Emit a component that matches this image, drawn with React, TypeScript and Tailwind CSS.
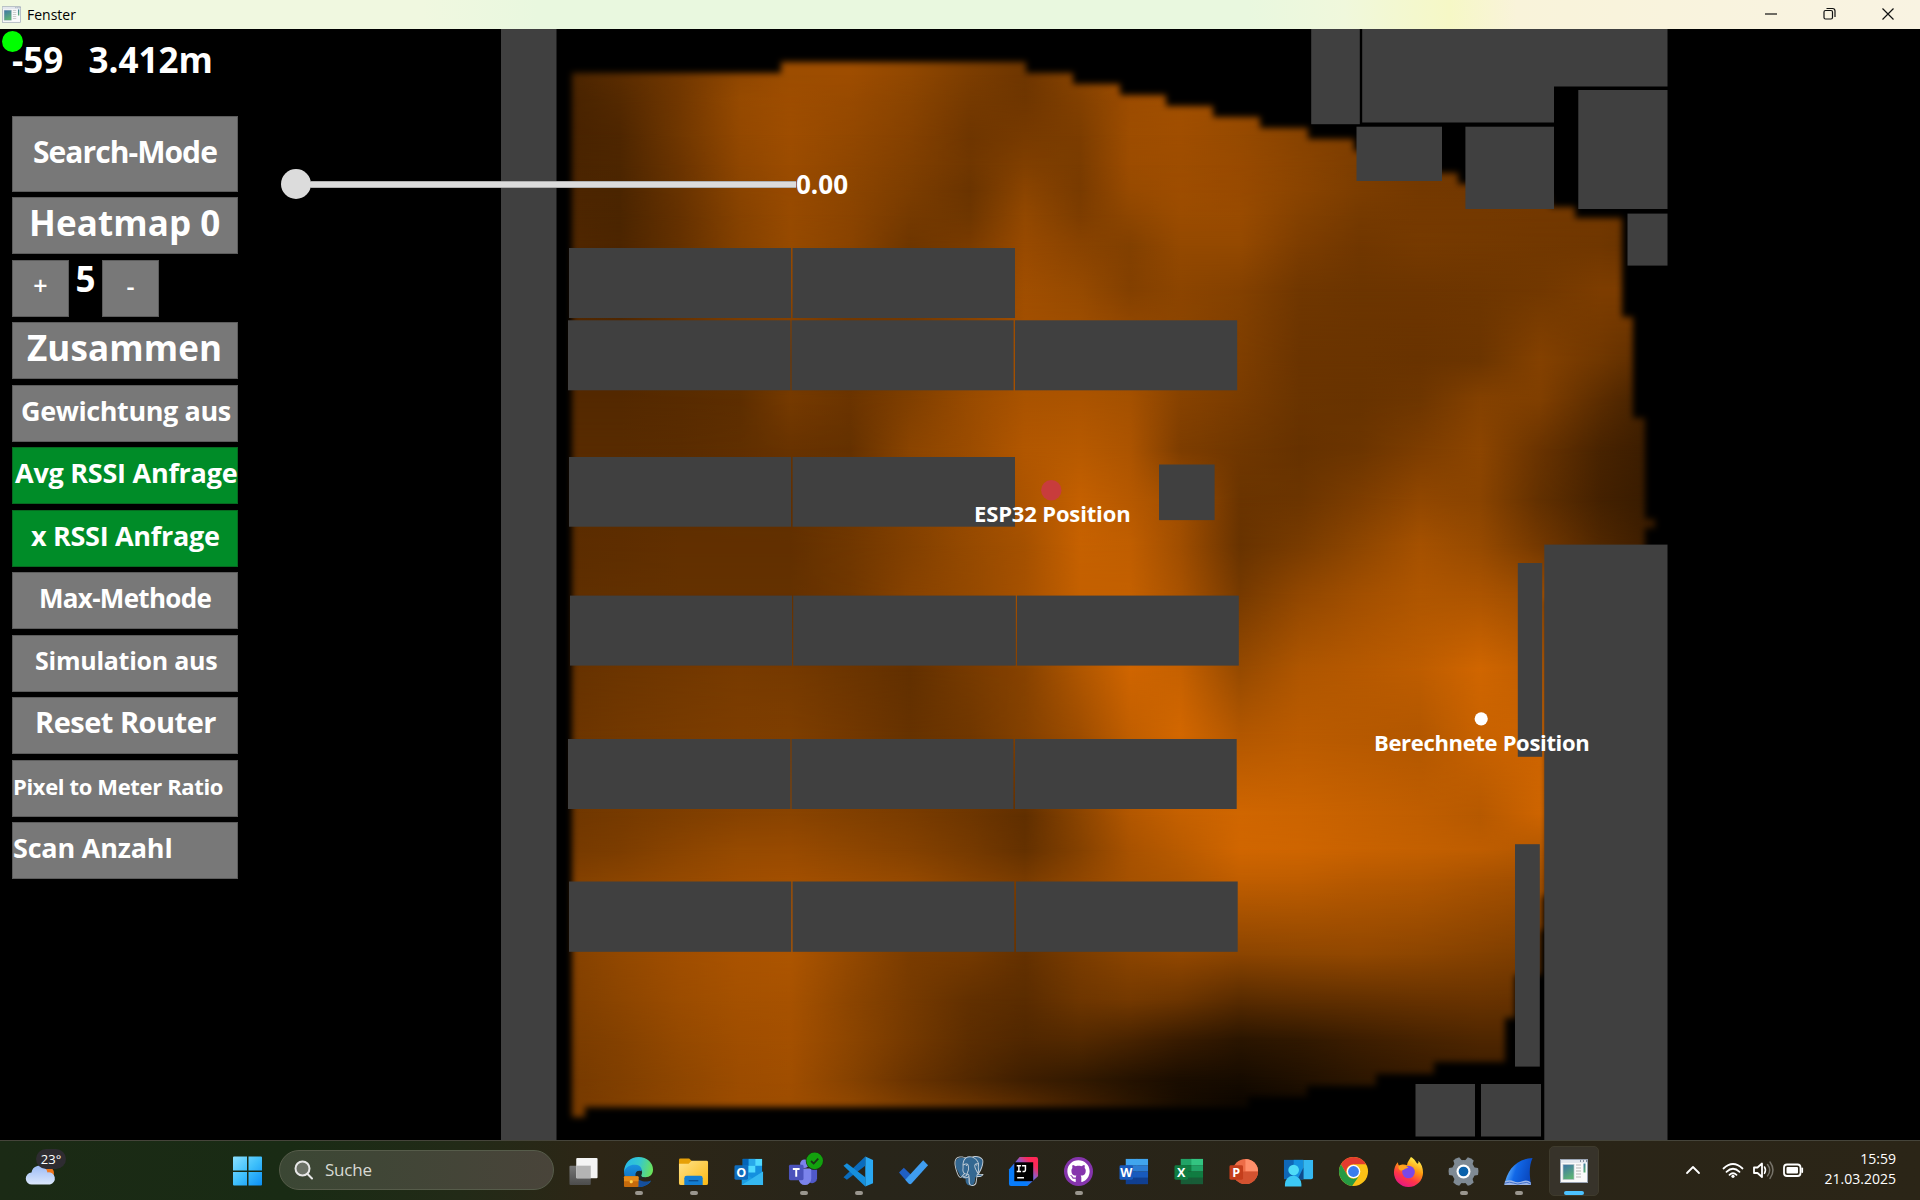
import React from "react";
import { SiPostgresql } from "react-icons/si";
import { FaGithub } from "react-icons/fa";

const SANS = "font-['Open_Sans','Noto_Sans',sans-serif]";

/* ---------- heat field ---------- */

const COLS = [570, 620, 680, 740, 790, 850, 910, 970, 1025, 1080, 1130, 1180, 1240, 1300, 1360, 1420, 1480, 1540, 1600, 1650];

const FIELD: [number, number[]][] = [
  [75, [75, 90, 114, 144, 157, 158, 144, 124, 110, 136, 160, 162, 155, 140, 125, 118, 115, 115, 112, 110]],
  [100, [72, 84, 113, 150, 158, 152, 138, 118, 111, 130, 156, 161, 153, 138, 125, 118, 115, 115, 112, 110]],
  [135, [72, 78, 112, 147, 158, 147, 133, 111, 119, 124, 157, 160, 150, 136, 125, 118, 115, 115, 112, 110]],
  [165, [74, 77, 107, 143, 155, 143, 128, 112, 128, 122, 156, 158, 152, 138, 124, 116, 115, 115, 115, 112]],
  [190, [76, 75, 104, 138, 152, 140, 124, 106, 138, 121, 151, 158, 152, 138, 124, 116, 115, 115, 115, 112]],
  [215, [78, 75, 101, 134, 151, 139, 118, 110, 146, 125, 142, 155, 153, 132, 118, 117, 116, 115, 114, 108]],
  [245, [80, 76, 100, 132, 150, 137, 110, 121, 152, 137, 130, 148, 148, 125, 113, 118, 116, 114, 112, 100]],
  [290, [80, 78, 112, 140, 145, 120, 112, 130, 160, 150, 131, 140, 132, 112, 108, 109, 110, 114, 125, 125]],
  [360, [84, 82, 90, 100, 115, 105, 120, 145, 165, 165, 160, 140, 126, 107, 106, 105, 108, 132, 112, 90]],
  [400, [84, 84, 88, 93, 118, 107, 128, 153, 170, 172, 165, 135, 122, 106, 104, 110, 132, 128, 92, 65]],
  [450, [88, 88, 90, 96, 104, 100, 138, 155, 178, 183, 172, 125, 112, 102, 108, 125, 140, 105, 72, 58]],
  [500, [90, 90, 92, 96, 98, 110, 132, 152, 172, 196, 182, 160, 106, 108, 125, 145, 138, 98, 68, 55]],
  [545, [92, 94, 98, 98, 98, 112, 130, 150, 165, 198, 192, 160, 104, 120, 142, 165, 150, 115, 80, 60]],
  [595, [95, 98, 100, 100, 100, 112, 135, 148, 166, 195, 195, 168, 118, 145, 162, 175, 172, 155, 110, 80]],
  [670, [102, 108, 114, 120, 118, 108, 98, 118, 135, 175, 207, 198, 150, 175, 182, 190, 208, 190, 180, 180]],
  [735, [108, 114, 120, 125, 126, 115, 102, 112, 132, 158, 192, 210, 178, 186, 182, 178, 200, 205, 200, 200]],
  [815, [112, 118, 126, 135, 138, 130, 122, 110, 96, 138, 178, 196, 208, 204, 198, 192, 182, 205, 200, 200]],
  [850, [118, 124, 138, 150, 152, 142, 132, 118, 100, 132, 168, 185, 208, 206, 200, 195, 190, 180, 170, 170]],
  [880, [130, 138, 148, 158, 162, 155, 148, 132, 120, 143, 165, 175, 192, 190, 182, 178, 168, 160, 150, 150]],
  [955, [132, 146, 160, 170, 173, 148, 122, 116, 100, 122, 138, 145, 138, 142, 145, 140, 132, 122, 110, 100]],
  [1000, [128, 140, 155, 165, 167, 140, 118, 98, 90, 110, 116, 108, 88, 94, 98, 103, 105, 100, 90, 80]],
  [1040, [122, 132, 148, 160, 164, 140, 116, 92, 80, 83, 72, 56, 42, 48, 60, 70, 78, 78, 70, 60]],
  [1080, [118, 128, 142, 156, 160, 134, 105, 82, 62, 50, 36, 26, 22, 32, 44, 52, 58, 60, 50, 50]],
  [1100, [118, 128, 142, 156, 158, 142, 118, 100, 82, 62, 42, 24, 14, 20, 30, 40, 45, 45, 40, 40]],
];

const OUTLINE =
  "M572 73H781V62H1026V73H1073V84H1120V95H1166V106H1213V117H1260V128H1308V139H1354V151H1400V162H1430V173H1458V184H1510V196H1550V207H1575V218H1622V317H1633V418H1645V519H1655V528H1645V600H1547V896H1543V930H1540V975H1515V1018H1505V1062H1434V1074H1376V1086H1307V1097H1248V1107H585V1117H572Z";

const X0 = 560;
const W = 1110;

const WALLS: [number, number, number, number][] = [
  [501, 29, 55.5, 1111],
  [569, 248, 222, 70], [792.6, 248, 222.4, 70],
  [568, 320.3, 222.4, 70], [791.6, 320.3, 222, 70], [1015, 320.3, 222.2, 70],
  [569, 457, 222, 69.7], [792.6, 457, 222.4, 69.7],
  [1159, 464.5, 55.6, 55.6],
  [570, 595.6, 222, 70], [793.2, 595.6, 222.6, 70], [1017, 595.6, 221.8, 70],
  [568, 739, 222.4, 70], [791.6, 739, 221.8, 70], [1015, 739, 221.7, 70],
  [569, 881.5, 222.2, 70.3], [792.6, 881.5, 221.6, 70.3], [1016, 881.5, 221.7, 70.3],
  [1311.2, 29, 48.6, 95.2],
  [1362.2, 29, 191.8, 93.5], [1554, 29, 113.5, 57.5],
  [1578.3, 90, 89.2, 119],
  [1627.5, 213.6, 40, 52],
  [1356.5, 126.7, 85.5, 54.3],
  [1465.4, 126.7, 88.6, 82.3],
  [1544.3, 544.6, 123.2, 595.4],
  [1517.8, 563, 24.4, 193.8],
  [1515, 844.2, 24.8, 222.4],
  [1415.5, 1084, 59.5, 52.5],
  [1481, 1084, 60, 52.5],
];

function FloorPlan() {
  return (
    <svg className="absolute left-0 top-0 h-full w-full" viewBox="0 29 1920 1111">
      <defs>
        <filter id="edge" x="-5%" y="-5%" width="110%" height="110%">
          <feGaussianBlur stdDeviation="3" />
        </filter>
        <mask id="shape" maskUnits="userSpaceOnUse" x="540" y="29" width="1140" height="1111">
          <path d={OUTLINE} fill="#fff" filter="url(#edge)" />
        </mask>
        <linearGradient id="fade" x1="0" x2="0" y1="0" y2="1">
          <stop offset="0" stopColor="#fff" stopOpacity="0" />
          <stop offset="1" stopColor="#fff" />
        </linearGradient>
        {FIELD.map(([y, values], i) => {
          const prev = i ? FIELD[i - 1][0] : y;
          return (
            <React.Fragment key={y}>
              <linearGradient id={`row${i}`} gradientUnits="userSpaceOnUse" x1={X0} x2={X0 + W} y1="0" y2="0">
                {values.map((v, c) => (
                  <stop key={c} offset={(COLS[c] - X0) / W} stopColor={`rgb(${v},${Math.round(v * 0.49)},0)`} />
                ))}
              </linearGradient>
              {i > 0 && (
                <mask id={`mask${i}`} maskUnits="userSpaceOnUse" x={X0} y={prev} width={W} height={1140 - prev}>
                  <rect x={X0} y={prev} width={W} height={y - prev} fill="url(#fade)" />
                  <rect x={X0} y={y} width={W} height={1140 - y} fill="#fff" />
                </mask>
              )}
            </React.Fragment>
          );
        })}
      </defs>
      <g mask="url(#shape)">
        {FIELD.map(([y], i) => {
          const top = i ? FIELD[i - 1][0] : 29;
          return (
            <rect key={y} x={X0} y={top} width={W} height={1140 - top} fill={`url(#row${i})`} mask={i ? `url(#mask${i})` : undefined} />
          );
        })}
      </g>
      {WALLS.map(([x, y, w, h], i) => (
        <rect key={i} x={x} y={y} width={w} height={h} fill="#404040" />
      ))}
      <circle cx="1051.3" cy="490.2" r="10.2" fill="#c83c3c" />
      <circle cx="1481.2" cy="718.8" r="6.6" fill="#fff" />
    </svg>
  );
}

/* ---------- side panel ---------- */

function PanelButton({ className = "", label, children }: { className?: string; label: string; children: string }) {
  return (
    <button className={`mb-[5.5px] flex h-[57px] w-[226px] shrink-0 items-start whitespace-pre border text-left font-bold text-white ${className}`}>
      <span className={`leading-none ${label}`}>{children}</span>
    </button>
  );
}

const GREY = "border-[#5c5c5c] bg-[#787878]";
const GREEN = "border-[#066a20] bg-[#008c28]";

function SidePanel() {
  return (
    <aside className="relative flex w-[250px] flex-col pl-[12px]">
      <div className="absolute left-[2px] top-[2px] size-[21px] rounded-full bg-[#00ff00]" />
      <div className="relative flex h-[87.25px] items-start pt-[13px] text-[35px] font-bold leading-none text-white">
        <span className="w-[76.5px]">-59</span>
        <span>3.412m</span>
      </div>
      <PanelButton className={`mb-[5px]! h-[76px]! ${GREY}`} label="pl-[20px] pt-[20px] text-[30px] tracking-[-0.95px]">Search-Mode</PanelButton>
      <PanelButton className={GREY} label="pl-[16px] pt-[7px] text-[35px] tracking-[0.1px]">Heatmap 0</PanelButton>
      <div className="mb-[5.5px] flex h-[57px] shrink-0 font-semibold text-white">
        <button className={`flex size-[57px] items-center justify-center border pb-[5px] text-[25px] leading-none ${GREY}`}>+</button>
        <span className="w-[33px] pt-[1px] text-center text-[35px] font-bold leading-none">5</span>
        <button className={`flex size-[57px] items-center justify-center border pb-[4px] text-[25px] leading-none ${GREY}`}>-</button>
      </div>
      <PanelButton className={GREY} label="pl-[14px] pt-[7px] text-[35px] tracking-[0.1px]">Zusammen</PanelButton>
      <PanelButton className={GREY} label="pl-[8px] pt-[11px] text-[27px] tracking-[-0.4px]">Gewichtung aus</PanelButton>
      <PanelButton className={GREEN} label="pl-[2px] pt-[11px] text-[27px] tracking-[-0.25px]">Avg RSSI Anfrage</PanelButton>
      <PanelButton className={GREEN} label="pl-[18px] pt-[11px] text-[27px] tracking-[-0.3px]">x RSSI Anfrage</PanelButton>
      <PanelButton className={GREY} label="pl-[26px] pt-[12px] text-[26px] tracking-[-0.7px]">Max-Methode</PanelButton>
      <PanelButton className={GREY} label="pl-[22px] pt-[12px] text-[25px] tracking-[-0.25px]">Simulation aus</PanelButton>
      <PanelButton className={GREY} label="pl-[22px] pt-[9px] text-[29px] tracking-[-0.5px]">Reset Router</PanelButton>
      <PanelButton className={GREY} label="pl-[0px] pt-[14px] text-[22px] tracking-[-0.36px]">Pixel to Meter Ratio</PanelButton>
      <PanelButton className={GREY} label="pl-[0px] pt-[11px] text-[27px] tracking-[-0.2px]">Scan Anzahl</PanelButton>
    </aside>
  );
}

/* ---------- task bar icons (32 × 32) ---------- */

function AppWindow({ className }: { className: string }) {
  return (
    <svg className={className} viewBox="0 0 28 24">
      <rect x=".5" y=".5" width="27" height="23" fill="#fafafa" stroke="#9aa4b4" />
      <rect x="1" y="1" width="26" height="3" fill="#e3e7ee" />
      <path d="M20 2h1M23 2h1M26 2h1" stroke="#5f7184" strokeWidth="1.4" />
      <rect x="3" y="5.500" width="11" height="15" fill="url(#appg)" stroke="#b9c2cc" strokeWidth=".7" />
      <path d="M16 6h5M16 9h5M16 12h5M16 15h5M16 18h5" stroke="#b5b5b5" strokeWidth="1" />
      <rect x="23.500" y="4.500" width="2" height="9" fill="url(#appg)" />
      <defs>
        <linearGradient id="appg" x1="0" y1="0" x2=".4" y2="1">
          <stop stopColor="#3d74a8" />
          <stop offset="1" stopColor="#5cb176" />
        </linearGradient>
      </defs>
    </svg>
  );
}

function Office({ letter, tile, children }: { letter: string; tile: string; children: React.ReactNode }) {
  return (
    <>
      {children}
      <rect x="1.500" y="9.500" width="14" height="15" rx="1.500" fill={tile} />
      <text x="8.500" y="21.600" textAnchor="middle" fontFamily="Open Sans, sans-serif" fontSize="13" fontWeight="700" fill="#fff">
        {letter}
      </text>
    </>
  );
}

function Bands({ colors }: { colors: string[] }) {
  return (
    <>
      {[0, 1, 2, 3].map((i) => (
        <g key={i}>
          <rect x="8" y={3 + i * 6.5} width="12" height="6.600" fill={colors[i * 2]} />
          <rect x="19" y={3 + i * 6.5} width="12" height="6.600" fill={colors[i * 2 + 1]} />
        </g>
      ))}
    </>
  );
}

type App = { name: string; state?: "open" | "active"; icon: React.ReactNode };

const APPS: App[] = [
  {
    name: "Taskansicht",
    icon: (
      <>
        <defs><linearGradient id="tv" x1="0" y1="0" x2="0" y2="1"><stop stopColor="#777" /><stop offset="1" stopColor="#4c4c4c" /></linearGradient></defs>
        <rect x="1.500" y="10" width="22" height="20" rx="1" fill="url(#tv)" />
        <rect x="8.500" y="2" width="22" height="21" rx="1" fill="#f4f4f4" />
        <rect x="8.500" y="10" width="15" height="13" fill="#b4b4b4" />
      </>
    ),
  },
  {
    name: "Edge",
    state: "open",
    icon: (
      <>
        <defs>
          <linearGradient id="e1" x1="0" y1=".3" x2="1" y2=".5"><stop stopColor="#25b7ea" /><stop offset=".5" stopColor="#35c8d0" /><stop offset="1" stopColor="#6be25a" /></linearGradient>
          <linearGradient id="e2" x1="0" y1="0" x2="0" y2="1"><stop stopColor="#1a93e0" /><stop offset="1" stopColor="#0b5fb4" /></linearGradient>
        </defs>
        <path d="M1 17C1 7 8 1 16 1c9 0 15 6 15 13 0 5-3 8-8 8-3 0-5-1-4-3 2-3 0-6-4-6-6 0-12 2-14 4z" fill="url(#e1)" />
        <path d="M1 16C3 11 8 8.500 13 9c5 .5 7 4 6 7-5-2-7 2-5 6 3 6 10 6 15 4-3 4-8 6-13 6C7 32 1 25 1 16z" fill="url(#e2)" />
        <path d="M14 22c2 4 10 6 15 3-2 4-8 7-13 7z" fill="#154f9c" />
        <path d="M18.500 15.500q-4.500-1-5.500 2.500v4q6 3 10 .2-5.500-.2-4-3.200.6-1.600-.5-3.500z" fill="#1e2a2c" />
        <rect x="1" y="21" width="15" height="11" rx="1" fill="#c56a0c" />
        <path d="M1 22a1 1 0 0 1 1-1h13a1 1 0 0 1 1 1v4H1z" fill="#e58a1a" />
        <rect x="7" y="25" width="3" height="3" rx="1" fill="#ffd24a" />
      </>
    ),
  },
  {
    name: "Explorer",
    state: "open",
    icon: (
      <>
        <defs><linearGradient id="fo" x1="0" y1="0" x2="1" y2="1"><stop stopColor="#ffe28a" /><stop offset="1" stopColor="#fbb913" /></linearGradient></defs>
        <path d="M1 4q0-1.500 1.500-1.500h9L14 5v6H1z" fill="#e6a008" />
        <path d="M1 8h10l3-3h15.500Q31 5 31 6.500V28q0 2-2 2H3q-2 0-2-2z" fill="url(#fo)" />
        <path d="M6.500 30v-7q0-2.500 2.500-2.500h14q2.500 0 2.500 2.500v7z" fill="#137ed2" />
        <path d="M11 25.500h10" stroke="#0a4f93" strokeWidth="1.400" />
      </>
    ),
  },
  {
    name: "Outlook",
    icon: (
      <Office letter="O" tile="#0f6cbd">
        <rect x="10" y="3" width="20" height="20" fill="#1490df" />
        <path d="M16 3h7v7h-7z" fill="#28a8ea" />
        <path d="M23 3h7v7h-7zM16 10h7v7h-7z" fill="#50d9ff" />
        <path d="M10 3h6v7h-6z" fill="#0364b8" />
        <path d="M9 16l11 7 11-7v14H9z" fill="#1b9de2" />
        <path d="M9 30l22-14v14z" fill="#35b8f1" />
      </Office>
    ),
  },
  {
    name: "Teams",
    state: "open",
    icon: (
      <>
        <circle cx="17" cy="8" r="4.500" fill="#7b83eb" />
        <path d="M22 14h8v9a5 5 0 0 1-8 4z" fill="#5059c9" />
        <path d="M11 13h13v10.500a6.500 6.500 0 0 1-13 0z" fill="#7b83eb" />
        <rect x="1" y="9" width="15" height="16" rx="1.500" fill="#4b53bc" />
        <path d="M5 13.500h7M8.500 13.500V21.500" stroke="#fff" strokeWidth="2" />
        <circle cx="27.500" cy="5" r="9.200" fill="#1c2a12" />
        <circle cx="27.500" cy="5" r="8.600" fill="#13a10e" />
        <path d="M23.800 5.200l2.700 2.600 4.700-5" stroke="#1d3217" strokeWidth="1.900" fill="none" />
      </>
    ),
  },
  {
    name: "VS Code",
    state: "open",
    icon: (
      <>
        <path d="M23 .5l8 3.500v24l-8 3.500z" fill="#2aa8f2" />
        <path d="M23 .5V10L4 24.500.5 22 23 .5z" fill="#0a6cbd" />
        <path d="M23 31.500V22L4 7.500.5 10 23 31.500z" fill="#168fdc" />
      </>
    ),
  },
  {
    name: "To Do",
    icon: (
      <>
        <path d="M1 17l5-5 9 9-4 7.500z" fill="#1f5fc4" />
        <path d="M11 28.500L7.500 24.500 26 4.500l5 5L14 28.500q-1.500 1.200-3 0z" fill="#3f9df0" />
      </>
    ),
  },
  { name: "pgAdmin", icon: null },
  {
    name: "IntelliJ",
    icon: (
      <>
        <defs><linearGradient id="ij" x1="0" y1="1" x2="1" y2="0"><stop offset=".35" stopColor="#087cfa" /><stop offset=".6" stopColor="#8d5bc8" /><stop offset=".8" stopColor="#fe2857" /></linearGradient></defs>
        <path d="M1 14L12 1h17q2 0 2 2v18L20 31H3q-2 0-2-2z" fill="url(#ij)" />
        <rect x="6.500" y="6.500" width="19.500" height="19.500" fill="#000" />
        <path d="M9 10h4.500M11.200 10v6M9 16h4.500M14.500 10H18v4.500q0 1.800-3 1.500M9.500 22.500h7" stroke="#fff" strokeWidth="1.500" fill="none" />
      </>
    ),
  },
  { name: "GitHub Desktop", state: "open", icon: null },
  {
    name: "Word",
    icon: <Office letter="W" tile="#185abd"><Bands colors={["#41a5ee", "#41a5ee", "#2b7cd3", "#2b7cd3", "#185abd", "#185abd", "#103f91", "#103f91"]} /></Office>,
  },
  {
    name: "Excel",
    icon: <Office letter="X" tile="#107c41"><Bands colors={["#21a366", "#33c481", "#107c41", "#21a366", "#107c41", "#107c41", "#185c37", "#185c37"]} /></Office>,
  },
  {
    name: "PowerPoint",
    icon: (
      <Office letter="P" tile="#c43e1c">
        <circle cx="18" cy="16" r="13" fill="#ed6c47" />
        <path d="M18 3a13 13 0 0 1 13 13H18z" fill="#ff8f6b" />
        <path d="M5 16h26a13 13 0 0 1-26 0z" fill="#d35230" />
      </Office>
    ),
  },
  {
    name: "Remotehilfe",
    icon: (
      <>
        <rect x="1" y="4" width="20" height="20" fill="#0f67b7" />
        <path d="M11 4h10v20H11z" fill="#1490df" />
        <path d="M21 4h10v18q0 2-2 2h-8z" fill="#35b8f1" />
        <path d="M15 24h6V12z" fill="#0f4b8c" />
        <circle cx="11" cy="14.500" r="5.500" fill="#4fdcf8" />
        <path d="M2 31.500v-2.500a8.500 8.500 0 0 1 17 0v2.500z" fill="#3cc8f4" />
      </>
    ),
  },
  {
    name: "Chrome",
    icon: (
      <>
        <circle cx="16" cy="16" r="15" fill="#fbc116" />
        <path d="M3 8.500a15 15 0 0 1 26 0H16a7.500 7.500 0 0 0-6.500 11.200z" fill="#e33b2e" />
        <path d="M3 8.500a15 15 0 0 0 11.500 22.400l8-11.200a7.500 7.500 0 0 1-13 0z" fill="#269a43" />
        <circle cx="16" cy="16" r="7" fill="#fff" />
        <circle cx="16" cy="16" r="5.600" fill="#3b7ded" />
      </>
    ),
  },
  {
    name: "Firefox",
    icon: (
      <>
        <defs>
          <linearGradient id="ff" x1=".8" y1="0" x2=".3" y2="1"><stop offset=".05" stopColor="#fff44f" /><stop offset=".4" stopColor="#ff980e" /><stop offset=".7" stopColor="#ff3647" /><stop offset="1" stopColor="#e31587" /></linearGradient>
        </defs>
        <path d="M18.500 1c4 2 5 5.500 7 7 1-.5.800-2 .7-3C29.500 8 31 12.500 31 17a15 15 0 0 1-30 0c0-4 1.500-8 4-10.500.2 1.500.5 2.500 1.500 3.500 3-2 6-1 8-.5C14.500 6 17 4 18.500 1z" fill="url(#ff)" />
        <circle cx="16" cy="16.500" r="6.500" fill="#7a48e8" />
        <path d="M6 10c4-1.500 8 0 10 2.500-4 0-5 2.500-7 2.500-3 0-4-3-3-5z" fill="#ffa51f" />
      </>
    ),
  },
  {
    name: "Einstellungen",
    state: "open",
    icon: (
      <>
        <g fill="#7f8a94">
          <circle cx="16" cy="16" r="12" />
          {[30, 90, 150, 210, 270, 330].map((a) => (
            <path key={a} d="M11.500 6l1-5q3.500-1 7 0l1 5z" transform={`rotate(${a} 16 16)`} />
          ))}
        </g>
        <circle cx="16" cy="16" r="7.200" fill="#fff" />
        <circle cx="16" cy="16" r="5" fill="#0b62ab" />
      </>
    ),
  },
  {
    name: "Wireshark",
    state: "open",
    icon: (
      <>
        <defs><linearGradient id="ws" x1="0" y1="0" x2="1" y2=".3"><stop offset=".2" stopColor="#5fb0ff" /><stop offset=".5" stopColor="#1168e8" /><stop offset="1" stopColor="#0a49c0" /></linearGradient></defs>
        <path d="M1.500 30C4 15 13 3 30.500 2 27 10 27 18 29 30z" fill="url(#ws)" />
        <path d="M2 26q5-2 9 0t9 0 8.500 1l.5 3H1.500z" fill="#9db8ea" />
        <path d="M2 28q5-2 9 0t9 0 8.500 1" stroke="#3f6cc8" fill="none" />
      </>
    ),
  },
  { name: "Fenster", state: "active", icon: null },
];

function Elephant() {
  return (
    <span className="relative flex size-[30px]">
      <svg className="absolute inset-0 size-full" viewBox="0 0 24 24" fill="#336791">
        <path d="M1 6C1 2 4 .8 8 1.500 11 .2 13 .5 15 1c4-1.200 8 .5 8 4 0 3-1.500 6-3.500 9.500 1 .5 2.500.3 3.500 0-1 2-3.500 2.800-6 2.500 0 3-.5 6.500-4 6.500-3 0-3.800-2-3.800-5.500C7 18.500 5 16.500 4 14 2.500 11 1 8.500 1 6z" />
      </svg>
      <SiPostgresql className="relative size-full text-[#c3ced8]" />
    </span>
  );
}

function TaskIcon({ app }: { app: App }) {
  const active = app.state === "active";
  return (
    <div className="flex w-[55px] justify-center py-[5px]">
      <div className={`relative flex h-[50px] w-[50px] items-center justify-center rounded-[5px] ${active ? "border border-[#3f3b2d] bg-[#37332a]" : ""}`}>
        {app.name === "pgAdmin" && <Elephant />}
        {app.name === "GitHub Desktop" && (
          <span className="flex size-[29px] items-center justify-center rounded-full bg-[#8534ac]">
            <FaGithub className="size-[23px] text-white" />
          </span>
        )}
        {active && <AppWindow className="h-[24px] w-[28px]" />}
        {app.icon && (
          <svg className="size-[31px] overflow-visible" viewBox="0 0 32 32">
            {app.icon}
          </svg>
        )}
        {app.state === "open" && <span className="absolute bottom-[1px] h-[4px] w-[8px] rounded-full bg-[#9a968e]" />}
        {active && <span className="absolute bottom-0 h-[4px] w-[20px] rounded-full bg-[#4cc2ff]" />}
      </div>
    </div>
  );
}

function TaskBar() {
  return (
    <footer className="flex h-[60px] border-t border-[#45443a] bg-[linear-gradient(90deg,#1b2a15_0%,#192b14_15%,#222a17_24%,#2d2616_31%,#28251a_45%,#292417_70%,#2b2517_100%)] text-white">
      <div className="relative w-[233px]">
        <svg className="absolute left-[25px] top-[8px] h-[52px] w-[44px]" viewBox="25 1148 44 52">
          <circle cx="48" cy="1172" r="6" fill="#f0761c" />
          <defs><linearGradient id="cl" x1="0" y1="0" x2="0" y2="1"><stop stopColor="#9dbcf5" /><stop offset="1" stopColor="#dbe7fc" /></linearGradient></defs>
          <path d="M32 1183.500a6 6 0 0 1-.5-12 8 8 0 0 1 14-4q1.500 1.500 2 4a6 6 0 0 1 2.500 12z" fill="url(#cl)" />
        </svg>
        <span className="absolute left-[36px] top-[8px] flex h-[20px] w-[30px] items-center justify-center rounded-full bg-[#2e2c31] text-[13px] leading-none">23°</span>
      </div>
      <svg className="mt-[15px] h-[30px] w-[30px]" viewBox="0 0 30 30">
        <defs><linearGradient id="win" x1="0" y1="0" x2="1" y2="1"><stop stopColor="#8be0ff" /><stop offset=".5" stopColor="#3fc0fb" /><stop offset="1" stopColor="#0b8ff5" /></linearGradient></defs>
        <path d="M0 1.500Q0 .5 1 .5H14v14H0zM15.500.5H28q1 0 1 1v13H15.500zM0 16H14V29.500H1q-1 0-1-1zM15.500 16H29v12.500q0 1-1 1H15.500z" fill="url(#win)" />
      </svg>
      <div className="ml-[16px] mt-[9px] flex h-[40px] w-[275px] items-center rounded-full border border-[#565c4a] bg-[linear-gradient(90deg,#3b4734,#49443a)] pl-[14px]">
        <svg className="h-[20px] w-[20px]" viewBox="0 0 20 20" fill="#6c7267" stroke="#e8e8e8" strokeWidth="2">
          <circle cx="8.500" cy="8.500" r="7" />
          <path d="M13.300 13.800l4.700 4.700" strokeLinecap="round" />
        </svg>
        <span className="pl-[11px] text-[17px] tracking-[-0.2px] text-[#d8dad4]">Suche</span>
      </div>
      <div className="ml-[2px] flex">
        {APPS.map((app) => (
          <TaskIcon key={app.name} app={app} />
        ))}
      </div>
      <div className="ml-auto flex items-start pr-[24px]">
        <svg className="mt-[9px] h-[40px] w-[130px]" viewBox="1680 1150 130 40" fill="none" stroke="#fff" strokeWidth="1.800" strokeLinecap="round" strokeLinejoin="round">
          <path d="M1687 1173l6-6 6 6" />
          <path d="M1723.500 1168.500q9.500-9 19 0M1726.500 1171.800q6.500-6 13 0M1729.500 1174.800q3.500-3.200 7 0" />
          <circle cx="1733" cy="1176.300" r="1.600" fill="#fff" stroke="none" />
          <path d="M1754 1167.500h3.500l4.500-4v13.500l-4.500-4H1754z" />
          <path d="M1764.500 1167q2 3.200 0 6.400" strokeWidth="1.500" />
          <path d="M1767.500 1164.500q4.500 5.700 0 11.400M1770 1162q6 8.200 0 16.400" stroke="#77736a" strokeWidth="1.500" />
          <rect x="1784" y="1164.500" width="16.500" height="11.500" rx="3" />
          <rect x="1786.500" y="1167" width="11.500" height="6.500" rx="1" fill="#fff" stroke="none" />
          <path d="M1802.200 1168.500v3.500" />
        </svg>
        <div className="ml-[10px] flex w-[76px] flex-col items-end pt-[8px] text-[14px] leading-[20px] whitespace-nowrap">
          <span>15:59</span>
          <span>21.03.2025</span>
        </div>
      </div>
    </footer>
  );
}

function TitleBar() {
  return (
    <header className="flex h-[29px] items-center bg-[linear-gradient(90deg,#f0f8e0_0%,#f0f8e0_22%,#e9f8df_28%,#e9f8df_65%,#f0f8dc_70%,#f6f8c6_75.500%,#f9f3da_79%,#f9f3e2_100%)]">
      <AppWindow className="ml-[2px] h-[17px] w-[19px]" />
      <span className="pl-[6px] text-[14px] text-black">Fenster</span>
      <svg className="ml-auto mr-[14px] h-[29px] w-[150px]" viewBox="1756 0 150 29" fill="none" stroke="#111" strokeWidth="1.200">
        <path d="M1765 14h12" />
        <rect x="1824" y="10.500" width="8.500" height="8.500" rx="1.500" />
        <path d="M1826.500 8.500h6q2.500 0 2.500 2.500v6" />
        <path d="M1882.500 8.500l11 11M1893.500 8.500l-11 11" />
      </svg>
    </header>
  );
}

export default function App() {
  return (
    <div className={`flex h-[1200px] w-[1920px] flex-col overflow-hidden bg-black ${SANS}`}>
      <TitleBar />
      <main className="relative flex h-[1111px] overflow-hidden font-bold text-white">
        <FloorPlan />
        <SidePanel />
        <div className="relative ml-[31px] mt-[140px] flex h-[30px] items-center">
          <span className="size-[30px] rounded-full bg-[#dcdcdc]" />
          <span className="-ml-[1px] h-[7px] w-[486px] border-y border-[#b0b0b0] bg-[#dcdcdc]" />
          <span className="pb-[1px] text-[26px] leading-none">0.00</span>
        </div>
        <span className="absolute left-[974px] top-[473px] whitespace-nowrap text-[22px] leading-none tracking-[-0.15px]">ESP32 Position</span>
        <span className="absolute left-[1374px] top-[702px] whitespace-nowrap text-[22px] leading-none tracking-[-0.33px]">Berechnete Position</span>
      </main>
      <TaskBar />
    </div>
  );
}
